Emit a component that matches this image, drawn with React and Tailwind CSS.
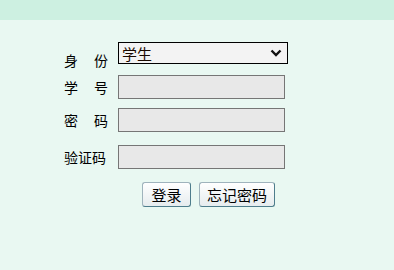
import React from "react";

const font = { fontFamily: '"Noto Sans CJK SC", "Noto Sans", sans-serif' };

function Label2({ a, b, className = "" }) {
  return (
    <div className={`w-[44px] flex justify-between text-[14px] leading-none text-black ${className}`}>
      <span>{a}</span>
      <span>{b}</span>
    </div>
  );
}

function Input() {
  return <div className="ml-[10px] w-[167px] h-[24px] bg-[#e8e8e8] border border-[#767676]" />;
}

function Btn({ children, w }) {
  return (
    <button
      className={`${w} h-[25px] rounded-[3px] border border-[#9fb3bc] border-r-[#4e7d8c] border-b-[#4e7d8c] bg-gradient-to-b from-white to-[#e6ecee] text-[15px] leading-none text-black flex items-center justify-center`}
    >
      {children}
    </button>
  );
}

export default function App() {
  return (
    <div className="w-[394px] h-[270px] bg-[#e9f8f2] flex flex-col" style={font}>
      <div className="h-[20px] bg-[#cdf0e1]" />
      <div className="flex flex-col pl-[64px] pt-[22px]">
        <div className="flex items-start h-[22px]">
          <Label2 a="身" b="份" className="mt-[11px]" />
          <div className="ml-[10px] w-[170px] h-[22px] bg-[#f3f3f3] border border-black flex items-center justify-between pl-[3px] pr-[5px]">
            <span className="text-[15px] leading-none text-[#1a0a00]">学生</span>
            <svg width="12" height="8" viewBox="0 0 12 8">
              <path d="M1.5 1.5 L6 6 L10.5 1.5" fill="none" stroke="#111" strokeWidth="2.4" />
            </svg>
          </div>
        </div>
        <div className="flex items-center mt-[11px]">
          <Label2 a="学" b="号" />
          <Input />
        </div>
        <div className="flex items-center mt-[9px]">
          <Label2 a="密" b="码" />
          <Input />
        </div>
        <div className="flex items-center mt-[13px]">
          <div className="w-[44px] text-[14px] leading-none text-black whitespace-nowrap">验证码</div>
          <Input />
        </div>
        <div className="flex mt-[13px] ml-[78px] gap-[8px]">
          <Btn w="w-[49px]">登录</Btn>
          <Btn w="w-[76px]">忘记密码</Btn>
        </div>
      </div>
    </div>
  );
}
